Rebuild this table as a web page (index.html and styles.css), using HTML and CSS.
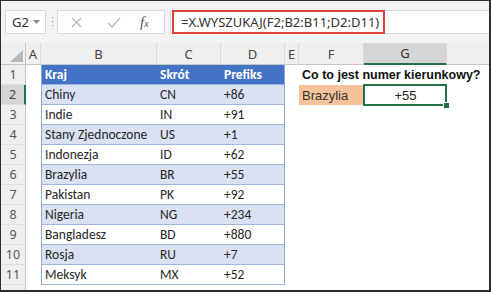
FILE: index.html
```html
<!DOCTYPE html>
<html>
<head>
<meta charset="utf-8">
<link rel="stylesheet" href="styles.css">
</head>
<body>
<div class="app">
  <div class="fbar">
    <div class="namebox"><span>G2</span><svg class="dd" width="7" height="4" viewBox="0 0 7 4"><polygon points="0,0 7,0 3.5,4" fill="#8a8a8a"/></svg></div>
    <svg class="grip" width="3" height="13" viewBox="0 0 3 13"><rect x="1" y="1" width="1.2" height="1.2" fill="#9a9a9a"/><rect x="1" y="5" width="1.2" height="1.2" fill="#9a9a9a"/><rect x="1" y="9" width="1.2" height="1.2" fill="#9a9a9a"/></svg>
    <div class="fnbox">
      <svg class="ico-x" width="11" height="11" viewBox="0 0 11 11"><path d="M1 1 L10 10 M10 1 L1 10" stroke="#b9b9b9" stroke-width="1.3" fill="none"/></svg>
      <svg class="ico-check" width="14" height="11" viewBox="0 0 14 11"><path d="M1 6 L5 10 L13 1" stroke="#b9b9b9" stroke-width="1.3" fill="none"/></svg>
      <span class="fx"><i>f</i><span class="fxsub">x</span></span>
    </div>
    <div class="formula"><div class="hl">=X.WYSZUKAJ(F2;B2:B11;D2:D11)</div></div>
  </div>
  <div class="sheet">
    <div class="ch corner"><svg width="13" height="12" viewBox="0 0 13 12"><polygon points="13,0 13,12 0,12" fill="#b8b8b8"/></svg></div>
    <div class="ch">A</div><div class="ch">B</div><div class="ch">C</div><div class="ch">D</div><div class="ch">E</div><div class="ch">F</div><div class="ch chsel">G</div><div class="ch chlast"></div>

    <div class="rh">1</div><div></div><div class="tc th cb">Kraj</div><div class="tc th">Skrót</div><div class="tc th cd">Prefiks</div><div></div><div class="q">Co to jest numer kierunkowy?</div>

    <div class="rh rhsel">2</div><div></div><div class="tc band cb">Chiny</div><div class="tc band">CN</div><div class="tc band cd">+86</div><div></div><div class="lookup">Brazylia</div><div class="result">+55</div>

    <div class="rh">3</div><div></div><div class="tc cb">Indie</div><div class="tc">IN</div><div class="tc cd">+91</div>
    <div class="rh">4</div><div></div><div class="tc band cb">Stany Zjednoczone</div><div class="tc band">US</div><div class="tc band cd">+1</div>
    <div class="rh">5</div><div></div><div class="tc cb">Indonezja</div><div class="tc">ID</div><div class="tc cd">+62</div>
    <div class="rh">6</div><div></div><div class="tc band cb">Brazylia</div><div class="tc band">BR</div><div class="tc band cd">+55</div>
    <div class="rh">7</div><div></div><div class="tc cb">Pakistan</div><div class="tc">PK</div><div class="tc cd">+92</div>
    <div class="rh">8</div><div></div><div class="tc band cb">Nigeria</div><div class="tc band">NG</div><div class="tc band cd">+234</div>
    <div class="rh">9</div><div></div><div class="tc cb">Bangladesz</div><div class="tc">BD</div><div class="tc cd">+880</div>
    <div class="rh">10</div><div></div><div class="tc band cb">Rosja</div><div class="tc band">RU</div><div class="tc band cd">+7</div>
    <div class="rh">11</div><div></div><div class="tc cb">Meksyk</div><div class="tc">MX</div><div class="tc cd">+52</div>
    <div class="rh rhend"></div>
  </div>
</div>
</body>
</html>
```

FILE: styles.css
```css
body {
  margin: 0;
  background: #fff;
}

.app {
  width: 491px;
  height: 292px;
  box-sizing: border-box;
  border-style: solid;
  border-color: #2e2e2e;
  border-width: 1px 2px 2px 1px;
  display: flex;
  flex-direction: column;
  overflow: hidden;
  background: #fff;
}

.fbar {
  flex: 0 0 42px;
  background: #f3f3f3;
  display: flex;
  align-items: center;
  padding-left: 4px;
  font-family: "Noto Sans", "Open Sans", sans-serif;
}

.namebox {
  width: 41px;
  height: 24px;
  box-sizing: border-box;
  background: #fff;
  border: 1px solid #d8d8d8;
  display: flex;
  align-items: center;
  justify-content: space-between;
  padding: 0 5px 0 6px;
  font-size: 13px;
  color: #333;
}

.grip {
  margin: 0 3px 0 5px;
}

.fnbox {
  width: 108px;
  height: 24px;
  box-sizing: border-box;
  background: #fff;
  border: 1px solid #d8d8d8;
  display: flex;
  align-items: center;
  padding-left: 13px;
}

.ico-check {
  margin-left: 25px;
}

.fx {
  margin-left: 19px;
  font-family: "Liberation Serif", serif;
  color: #555;
  font-size: 15px;
  display: flex;
  align-items: baseline;
}

.fxsub {
  font-style: italic;
  font-size: 10px;
}

.formula {
  margin-left: 5px;
  flex: 1;
  height: 24px;
  box-sizing: border-box;
  background: #fff;
  border: 1px solid #d8d8d8;
  border-right: none;
  display: flex;
}

.hl {
  margin: -1px 0 -1px 1px;
  width: 213px;
  box-sizing: border-box;
  border: 2px solid #e0403a;
  padding-left: 7px;
  display: flex;
  align-items: center;
  font-size: 13px;
  color: #333;
  white-space: nowrap;
}

.sheet {
  flex: 1;
  display: grid;
  grid-template-columns: 25px 15px 116px 64px 64px 14px 65px 83px 1fr;
  grid-template-rows: 22px repeat(11, 20px) 1fr;
}

.ch {
  background: #efefef;
  border-right: 1px solid #d9d9d9;
  border-bottom: 1px solid #c6c6c6;
  box-sizing: border-box;
  display: flex;
  align-items: center;
  justify-content: center;
  font-family: "Noto Sans", "Open Sans", sans-serif;
  font-size: 13px;
  color: #444;
}

.corner {
  justify-content: flex-end;
  align-items: flex-end;
  padding: 0 2px 2px 0;
  border-right-color: #c6c6c6;
}

.chsel {
  background: #d5d5d5;
  border-bottom: 2px solid #217346;
  color: #333;
}

.chlast {
  border-right: none;
}

.rh {
  grid-column: 1;
  background: #efefef;
  border-right: 1px solid #c6c6c6;
  border-bottom: 1px solid #dedede;
  box-sizing: border-box;
  display: flex;
  align-items: center;
  justify-content: center;
  font-family: "Noto Sans", "Open Sans", sans-serif;
  font-size: 12.5px;
  color: #555;
}

.rhsel {
  background: #d5d5d5;
  border-right: 2px solid #217346;
  color: #444;
}

.rhend {
  border-bottom: none;
}

.tc {
  box-sizing: border-box;
  display: flex;
  align-items: center;
  padding-left: 3px;
  font-family: Carlito, Lato, sans-serif;
  font-size: 13.5px;
  color: #262626;
  white-space: nowrap;
  border-bottom: 1px solid #9db4de;
}

.th {
  background: #4472c4;
  color: #fff;
  font-weight: bold;
}

.band {
  background: #d9e1f2;
}

.cb {
  border-left: 1px solid #8eaadb;
}

.cd {
  border-right: 1px solid #8eaadb;
}

.q {
  display: flex;
  align-items: center;
  padding-left: 3px;
  font-family: "Liberation Sans", Arial, sans-serif;
  font-weight: bold;
  font-size: 12.5px;
  color: #111;
  white-space: nowrap;
}

.lookup {
  background: #f6c29a;
  display: flex;
  align-items: center;
  padding-left: 3px;
  font-family: "Liberation Sans", Arial, sans-serif;
  font-size: 13px;
  color: #333;
}

.result {
  position: relative;
  display: flex;
  align-items: center;
  justify-content: center;
  font-family: "Liberation Sans", Arial, sans-serif;
  font-size: 13px;
  color: #222;
}

.result::after {
  content: "";
  position: absolute;
  left: -1px;
  top: -1px;
  right: 0;
  bottom: -1px;
  border: 2px solid #217346;
}

.result::before {
  content: "";
  position: absolute;
  right: -3px;
  bottom: -4px;
  width: 5px;
  height: 5px;
  background: #217346;
  border: 1px solid #fff;
  z-index: 1;
}
```
